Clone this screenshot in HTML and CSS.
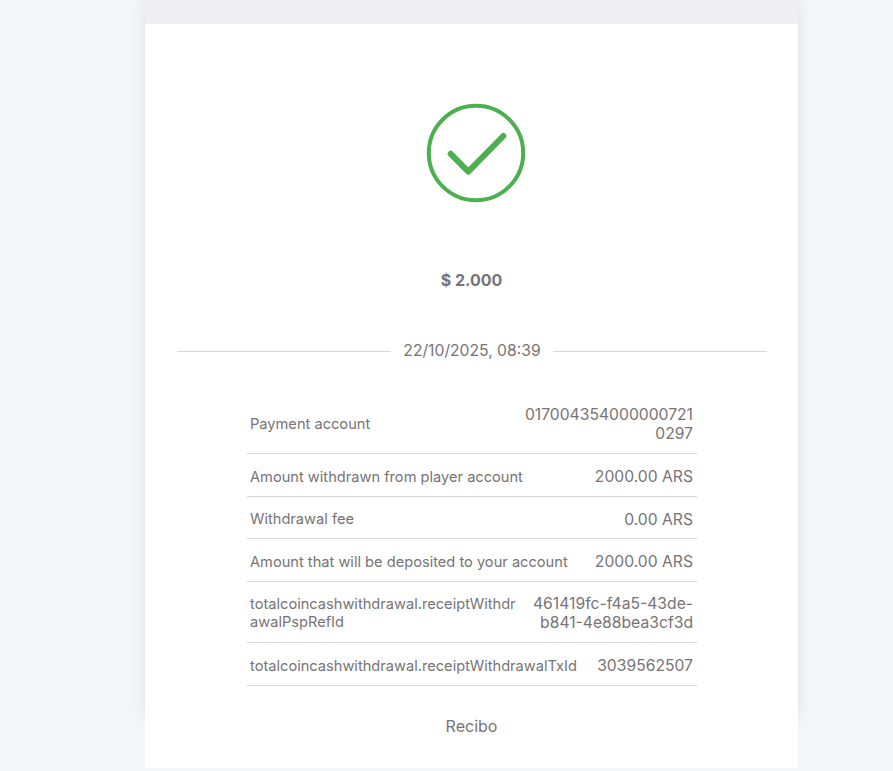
FILE: index.html
```html
<!DOCTYPE html>
<html lang="en">
<head>
    <meta charset="UTF-8">
    <title>Recibo</title>
    <link rel="stylesheet" href="styles.css">
</head>
<body>

<div class="page">
    <div class="card">
        <div class="topbar"></div>
        <div class="status">
            <svg class="check" width="100" height="100" viewBox="0 0 100 100" fill="none" stroke="#4caf50">
                <circle cx="50" cy="50" r="47.2" stroke-width="4"/>
                <path d="M24.7 50.8 L42.3 68.7 L77.3 33" stroke-width="6" stroke-linecap="round" stroke-linejoin="round"/>
            </svg>
        </div>
        <div class="amount">$ 2.000</div>
        <div class="date">22/10/2025, 08:39</div>
        <div class="details">
            <div class="row row-account">
                <div class="label">Payment account</div>
                <div class="value">017004354000000721 0297</div>
            </div>
            <div class="row">
                <div class="label">Amount withdrawn from player account</div>
                <div class="value">2000.00 ARS</div>
            </div>
            <div class="row">
                <div class="label">Withdrawal fee</div>
                <div class="value">0.00 ARS</div>
            </div>
            <div class="row">
                <div class="label">Amount that will be deposited to your account</div>
                <div class="value">2000.00 ARS</div>
            </div>
            <div class="row row-ref">
                <div class="label">totalcoincashwithdrawal.receiptWithdrawalPspRefId</div>
                <div class="value">461419fc-f4a5-43de-b841-4e88bea3cf3d</div>
            </div>
            <div class="row row-tx">
                <div class="label">totalcoincashwithdrawal.receiptWithdrawalTxId</div>
                <div class="value">3039562507</div>
            </div>
        </div>
    </div>
    <div class="footer">Recibo</div>
</div>

</body>
</html>
```

FILE: styles.css
```css
* {
    box-sizing: border-box;
}

html, body {
    height: 100%;
}

body {
    margin: 0;
    background-color: #f4f6fa;
    color: #787474;
    font-family: Inter, "Liberation Sans", sans-serif;
    font-size: 14.64px;
    overflow: hidden;
}

.page {
    width: 653px;
    margin-left: 145px;
}

/* footer sits over the bottom of the card, so the shadow only shows at the sides */
.card {
    height: 717px;
    background-color: #fff;
    box-shadow: 0 0 15px rgba(0, 0, 0, 0.1);
}

.topbar {
    height: 24px;
    background-color: #efeff1;
}

.status {
    display: flex;
    justify-content: center;
    padding: 79px 0 0 9px;
}

.check {
    display: block;
    width: 100px;
    height: 100px;
}

.amount {
    margin-top: 67px;
    font-size: 16px;
    font-weight: 700;
    line-height: 20px;
    text-align: center;
}

.date {
    display: flex;
    align-items: center;
    gap: 12px;
    margin: 51px 31px 0 32px;
    font-size: 15.7px;
    line-height: 20px;
}

.date::before, .date::after {
    content: '';
    flex: 1;
    height: 1px;
    background-color: #d6d6d6;
}

.details {
    width: 450px;
    margin: 37px 0 0 102px;
}

.row {
    display: flex;
    justify-content: space-between;
    align-items: center;
    gap: 16px;
    min-height: 42.5px;
    padding: 4px 4px 0 3px;
    border-bottom: 1px solid #d6d6d6;
}

.label {
    line-height: 18px;
    overflow-wrap: anywhere;
}

.value {
    font-size: 15.7px;
    line-height: 19px;
    text-align: right;
    overflow-wrap: anywhere;
}

.row-account {
    padding-top: 7px;
    padding-bottom: 10px;
}

.row-account .value {
    width: 170px;
}

.row-ref {
    padding-top: 12px;
    padding-bottom: 10px;
}

.row-ref .label {
    width: 268px;
}

.row-ref .value {
    width: 162px;
}

.row-tx {
    min-height: 43px;
}

.footer {
    position: relative;
    height: 56px;
    margin-top: -5px;
    padding-top: 5px;
    background-color: #fff;
    font-size: 16px;
    line-height: 18px;
    text-align: center;
}
```
